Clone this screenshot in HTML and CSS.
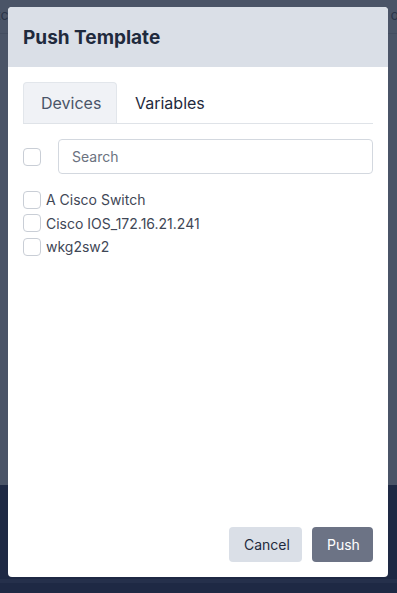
FILE: index.html
```html
<!DOCTYPE html>
<html lang="en">
<head>
  <meta charset="UTF-8" />
  <title>Push Template</title>
  <link rel="stylesheet" href="styles.css">
</head>
<body>

<!-- page behind the modal (dimmed) -->
<div class="page">
  <div class="page-top">
    <div class="page-nav">
      <span class="nav-left">tc</span>
      <span class="nav-right">o</span>
    </div>
  </div>
  <div class="page-bottom">
    <div class="page-band"></div>
  </div>
</div>

<!-- Modal -->
<div class="modal-overlay">
  <div class="modal">
    <div class="modal-header">
      <h3>Push Template</h3>
    </div>

    <div class="modal-body">
      <div class="tabs">
        <div class="tab active">Devices</div>
        <div class="tab">Variables</div>
      </div>

      <div class="search-row">
        <span class="check"></span>
        <input type="text" class="search" placeholder="Search" />
      </div>

      <ul class="device-list">
        <li><span class="check"></span>A Cisco Switch</li>
        <li><span class="check"></span>Cisco IOS_172.16.21.241</li>
        <li><span class="check"></span>wkg2sw2</li>
      </ul>
    </div>

    <div class="modal-footer">
      <button class="btn cancel">Cancel</button>
      <button class="btn push">Push</button>
    </div>
  </div>
</div>

</body>
</html>
```

FILE: styles.css
```css
* {
  box-sizing: border-box;
  margin: 0;
  padding: 0;
  font-family: 'Inter', 'Noto Sans', sans-serif;
}

body {
  width: 397px;
  height: 593px;
  overflow: hidden;
  position: relative;
  background: #1f2a44;
}

/* dimmed page */
.page {
  height: 100%;
  display: flex;
  flex-direction: column;
}

.page-top {
  height: 485px;
  background: #4a5467;
}

.page-nav {
  height: 34px;
  border-bottom: 1px solid #434d60;
  display: flex;
  justify-content: space-between;
  align-items: center;
  color: #2a3449;
  font-size: 14px;
  overflow: hidden;
}

.nav-left {
  margin-left: -4px;
  margin-top: -4px;
}

.nav-right {
  margin-right: -2px;
  margin-top: -4px;
}

.page-bottom {
  flex: 1;
  background: #1e2944;
  padding-top: 94px;
}

.page-band {
  height: 4px;
  background: #25304b;
}

/* modal */
.modal-overlay {
  position: absolute;
  top: 7px;
  left: 8px;
}

.modal {
  width: 380px;
  height: 570px;
  background: #ffffff;
  border-radius: 4px;
  overflow: hidden;
  display: flex;
  flex-direction: column;
}

.modal-header {
  height: 60px;
  background: #dadfe7;
  display: flex;
  align-items: center;
  padding: 0 15px;
}

.modal-header h3 {
  font-size: 19px;
  font-weight: 700;
  color: #1f2a3d;
  margin-top: 1px;
}

.modal-body {
  flex: 1;
  padding: 15px 15px 0;
}

.tabs {
  display: flex;
  border-bottom: 1px solid #dfe3e8;
  height: 42px;
}

.tab {
  padding: 0 17px;
  display: flex;
  align-items: center;
  font-size: 16px;
  color: #1f2a3d;
  border: 1px solid transparent;
  border-bottom: none;
  border-radius: 4px 4px 0 0;
}

.tab.active {
  background: #f0f2f6;
  border-color: #e2e6eb;
  color: #4a5568;
  width: 94px;
}

.search-row {
  display: flex;
  align-items: center;
  gap: 17px;
  margin-top: 15px;
}

.check {
  width: 18px;
  height: 18px;
  border: 1px solid #c9ced6;
  border-radius: 4px;
  background: #fff;
  flex-shrink: 0;
  display: inline-block;
}

.search {
  flex: 1;
  height: 35px;
  border: 1px solid #d3d8df;
  border-radius: 4px;
  padding: 0 13px;
  font-size: 14px;
  color: #374151;
  outline: none;
}

.search::placeholder {
  color: #6b7280;
}

.device-list {
  list-style: none;
  margin-top: 14px;
}

.device-list li {
  display: flex;
  align-items: center;
  gap: 5px;
  height: 23.5px;
  font-size: 14px;
  color: #3f4756;
}

.modal-footer {
  display: flex;
  justify-content: flex-end;
  gap: 10px;
  padding: 0 15px 15px;
}

.btn {
  height: 35px;
  border: none;
  border-radius: 4px;
  font-size: 14px;
  padding: 0 15px;
}

.btn.cancel {
  background: #dadfe7;
  color: #1f2a3d;
  width: 73px;
}

.btn.push {
  background: #6c7385;
  color: #ffffff;
  width: 61px;
}
```
